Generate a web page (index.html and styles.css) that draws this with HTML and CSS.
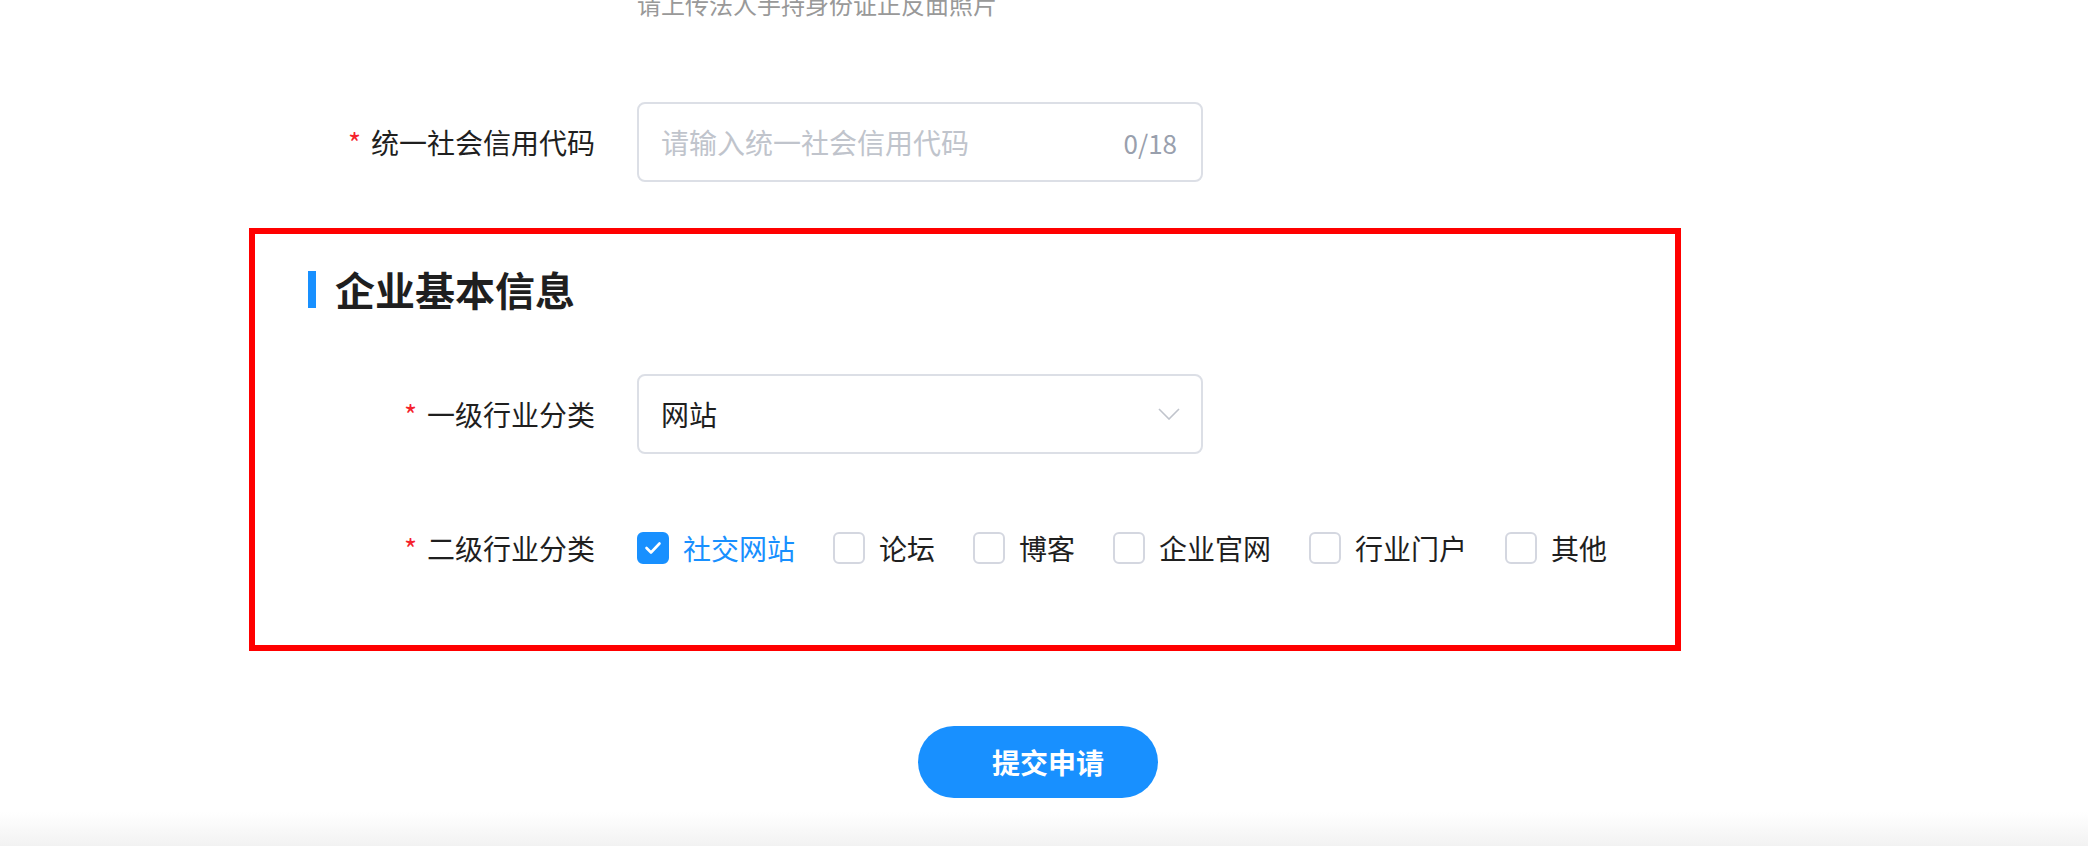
FILE: index.html
```html
<!DOCTYPE html>
<html lang="zh-CN">
<head>
    <meta charset="UTF-8">
    <meta name="viewport" content="width=device-width, initial-scale=1.0">
    <title>企业认证</title>
    <link rel="stylesheet" href="styles.css">
</head>
<body>
    <div class="form">
        <div class="hint">请上传法人手持身份证正反面照片</div>

        <div class="form-item first-item">
            <label class="form-label"><span class="required">*</span>统一社会信用代码</label>
            <div class="input">
                <input type="text" placeholder="请输入统一社会信用代码">
                <span class="counter">0/18</span>
            </div>
        </div>

        <div class="section">
            <h2 class="section-title">企业基本信息</h2>

            <div class="form-item">
                <label class="form-label"><span class="required">*</span>一级行业分类</label>
                <div class="select">
                    <span class="select-value">网站</span>
                    <svg class="chevron" width="22" height="12" viewBox="0 0 22 12">
                        <polyline points="1,1 11,11 21,1" fill="none" stroke="#c0c4cc" stroke-width="1.6"/>
                    </svg>
                </div>
            </div>

            <div class="form-item last-item">
                <label class="form-label"><span class="required">*</span>二级行业分类</label>
                <div class="checkbox-group">
                    <label class="checkbox checked">
                        <span class="box">
                            <svg width="32" height="32" viewBox="0 0 32 32">
                                <polyline points="9.5,16 14,20.5 22.5,11.5" fill="none" stroke="#fff" stroke-width="2.6" stroke-linecap="round" stroke-linejoin="round"/>
                            </svg>
                        </span>
                        <span class="checkbox-text">社交网站</span>
                    </label>
                    <label class="checkbox"><span class="box"></span><span class="checkbox-text">论坛</span></label>
                    <label class="checkbox"><span class="box"></span><span class="checkbox-text">博客</span></label>
                    <label class="checkbox"><span class="box"></span><span class="checkbox-text">企业官网</span></label>
                    <label class="checkbox"><span class="box"></span><span class="checkbox-text">行业门户</span></label>
                    <label class="checkbox"><span class="box"></span><span class="checkbox-text">其他</span></label>
                </div>
            </div>
        </div>

        <div class="actions">
            <button class="button">提交申请</button>
        </div>
    </div>
    <div class="bottom-shade"></div>
</body>
</html>
```

FILE: styles.css
```css
html, body {
    margin: 0;
    padding: 0;
}
body {
    font-family: "Noto Sans CJK SC", "Noto Sans", sans-serif;
    color: #1f1f1f;
    background: #fff;
    overflow: hidden;
}
.hint {
    margin-top: -8px;
    padding-left: 637px;
    font-size: 24px;
    line-height: 24px;
    color: #999;
}
.form-item {
    display: flex;
    align-items: center;
    height: 80px;
}
.first-item {
    margin-top: 86px;
}
.form-label {
    width: 637px;
    box-sizing: border-box;
    padding-right: 42px;
    text-align: right;
    font-size: 28px;
    line-height: 40px;
    color: #1f1f1f;
}
.required {
    color: #f5222d;
    margin-right: 10px;
}
.input, .select {
    width: 566px;
    height: 80px;
    box-sizing: border-box;
    border: 2px solid #dcdfe6;
    border-radius: 8px;
    display: flex;
    align-items: center;
    padding: 0 24px 0 22px;
}
.input input {
    flex: 1;
    border: none;
    outline: none;
    padding: 0;
    font-family: inherit;
    font-size: 28px;
    color: #1f1f1f;
    background: transparent;
}
.input input::placeholder {
    color: #c0c4cc;
}
.counter {
    font-size: 26px;
    color: #99a0ad;
}
.select {
    justify-content: space-between;
    padding-right: 21px;
}
.select-value {
    font-size: 28px;
    color: #1f1f1f;
}
.section {
    margin-top: 46px;
    margin-left: 249px;
    width: 1432px;
    box-sizing: border-box;
    border: 6px solid #ff0000;
    padding: 35px 0 57px 0;
}
.section .form-label {
    width: 382px;
}
.section-title {
    margin: 0 0 65px 0;
    padding-left: 53px;
    display: flex;
    align-items: center;
    font-size: 40px;
    line-height: 40px;
    font-weight: bold;
    color: #1f1f1f;
}
.section-title::before {
    content: "";
    width: 8px;
    height: 37px;
    background: #1890ff;
    margin-right: 19px;
}
.section .form-item + .form-item {
    margin-top: 54px;
}
.checkbox-group {
    display: flex;
    align-items: center;
}
.checkbox {
    display: flex;
    align-items: center;
    margin-right: 38px;
    font-size: 28px;
    line-height: 40px;
}
.box {
    width: 32px;
    height: 32px;
    box-sizing: border-box;
    border: 2px solid #d4d7e0;
    border-radius: 6px;
    margin-right: 14px;
    position: relative;
}
.checked .box {
    background: #1890ff;
    border-color: #1890ff;
}
.checked .box svg {
    position: absolute;
    left: -2px;
    top: -2px;
}
.checked .checkbox-text {
    color: #1890ff;
}
.actions {
    margin-top: 75px;
    padding-left: 918px;
}
.button {
    width: 240px;
    height: 72px;
    padding: 0 0 0 20px;
    border: none;
    border-radius: 36px;
    background: #1890ff;
    color: #fff;
    font-family: inherit;
    font-size: 28px;
    font-weight: bold;
    cursor: pointer;
}
.bottom-shade {
    margin-top: 14px;
    height: 34px;
    background: linear-gradient(to bottom, #ffffff, #f2f2f2);
}
```
